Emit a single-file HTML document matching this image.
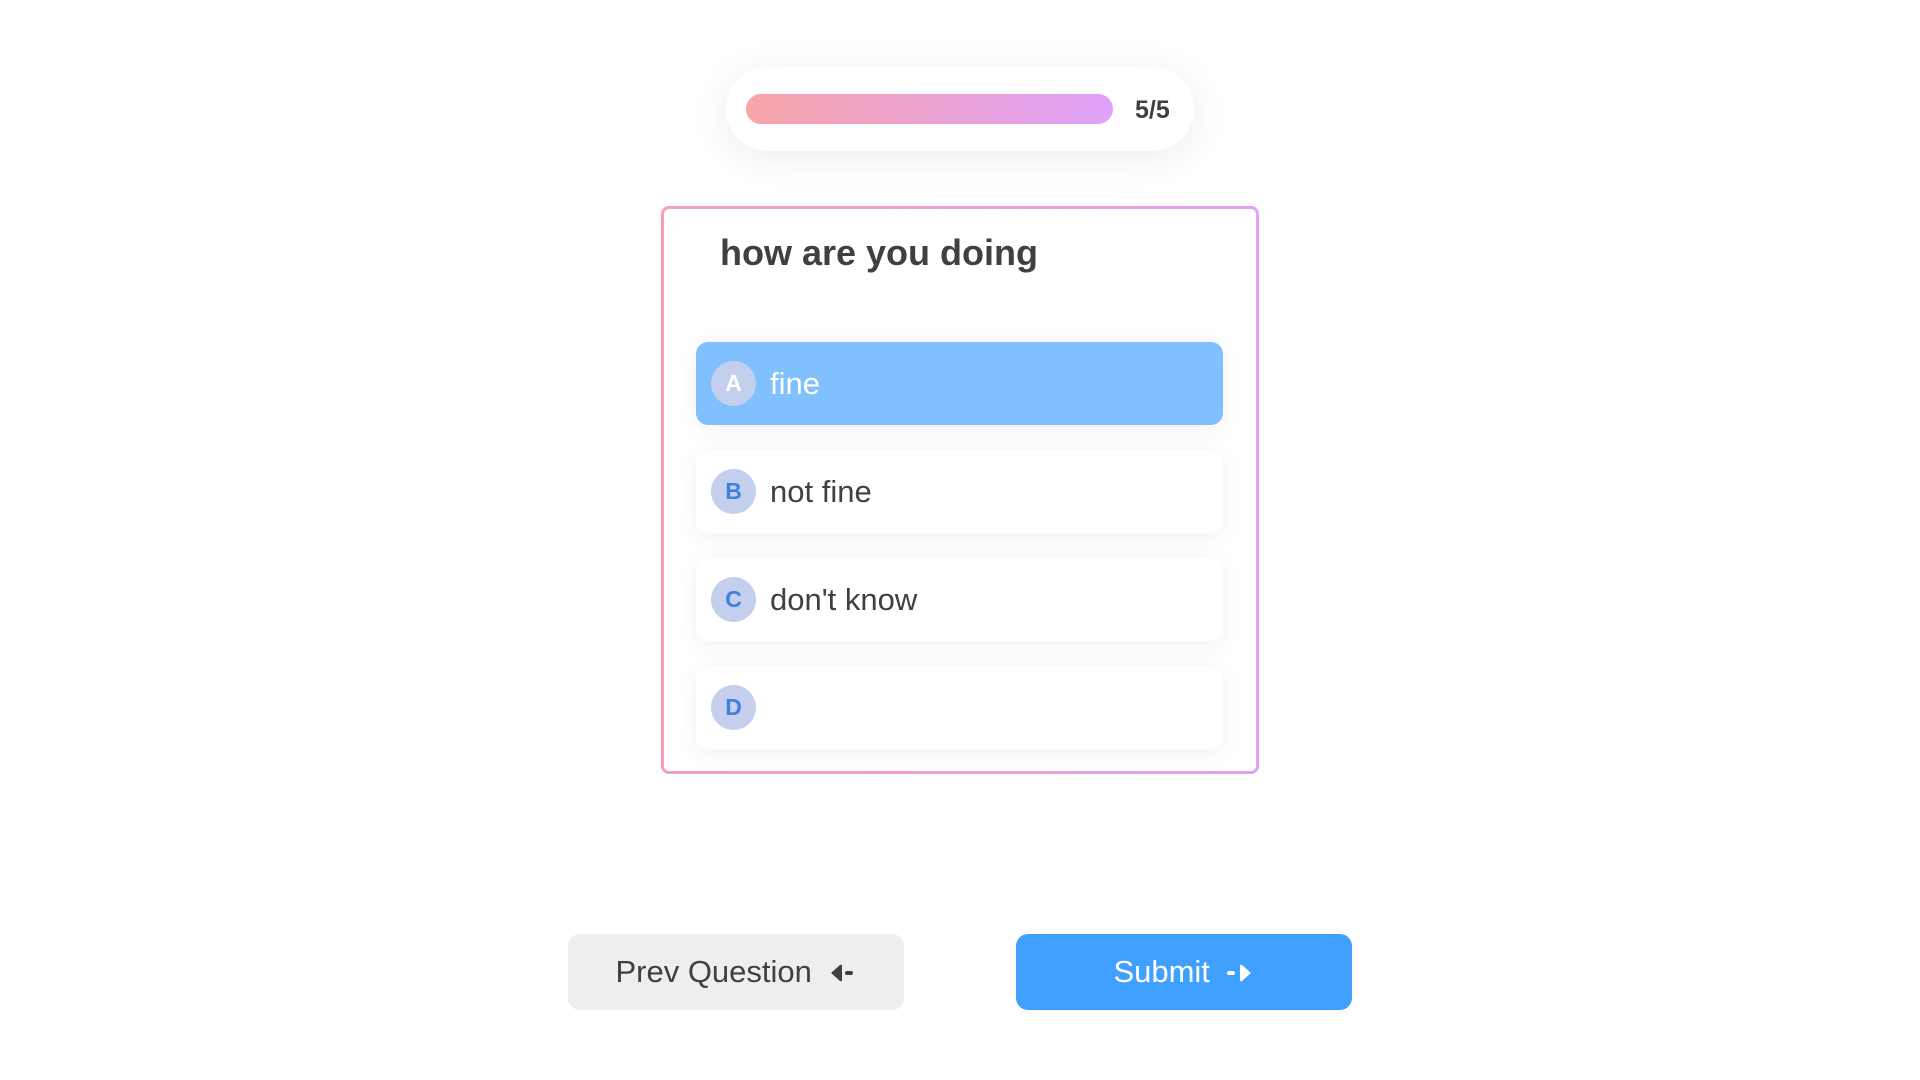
<!DOCTYPE html>
<html><head><style>
*{box-sizing:border-box;margin:0;padding:0}
body{width:1920px;height:1080px;background:#fff;font-family:"Liberation Sans",sans-serif;position:relative;overflow:hidden;color:#404040}
.prog{position:absolute;left:726px;top:67px;width:468px;height:84px;border-radius:42px;background:#fff;box-shadow:0 6px 40px rgba(0,0,0,0.08)}
.bar{position:absolute;left:20px;top:27px;width:367px;height:30px;border-radius:15px;background:linear-gradient(90deg,#f8a4a8,#dfa2fa)}
.num{position:absolute;left:409px;top:1px;line-height:84px;font-size:25px;font-weight:bold;color:#404040}
.card{position:absolute;left:661px;top:206px;width:598px;height:568px;border-radius:8px;border:3px solid transparent;background:linear-gradient(#fff,#fff) padding-box,linear-gradient(90deg,#f6a0b2,#e0a2ee) border-box}
.q{position:absolute;left:56px;top:23px;font-size:36px;font-weight:bold;color:#404040}
.opt{position:absolute;left:32px;width:527px;height:83px;border-radius:12px;background:#fff;box-shadow:0 4px 24px rgba(0,0,0,0.06)}
.opt.sel{background:#80c0fe}
.c{position:absolute;left:15px;top:19px;width:45px;height:45px;border-radius:50%;background:#c3cfec;color:#3f7fdf;font-weight:bold;font-size:23px;text-align:center;line-height:45px}
.sel .c{color:#fff}
.t{position:absolute;left:74px;top:0;line-height:83px;font-size:31px;color:#404040}
.sel .t{color:#fff}
.btn{position:absolute;top:934px;width:336px;height:76px;border-radius:12px;font-size:31px;line-height:76px;text-align:center}
</style></head><body>
<div class="prog"><div class="bar"></div><div class="num">5/5</div></div>
<div class="card">
<div class="q">how are you doing</div>
<div class="opt sel" style="top:133px"><div class="c">A</div><div class="t">fine</div></div>
<div class="opt" style="top:241px"><div class="c">B</div><div class="t">not fine</div></div>
<div class="opt" style="top:349px"><div class="c">C</div><div class="t">don't know</div></div>
<div class="opt" style="top:457px"><div class="c">D</div></div>
</div>
<div class="btn" style="left:568px;background:#eeeeee;color:#404040">Prev Question <svg width="30" height="22" viewBox="0 0 30 22" style="vertical-align:-2px;margin-left:6px"><path d="M4 11 L13 3 Q15 2 15 4 L15 18 Q15 20 13 19 Z" fill="#404040"/><rect x="18" y="9" width="8" height="4" rx="2" fill="#404040"/></svg></div>
<div class="btn" style="left:1016px;background:#40a0ff;color:#fff">Submit <svg width="30" height="22" viewBox="0 0 30 22" style="vertical-align:-2px;margin-left:6px"><rect x="2" y="9" width="8" height="4" rx="2" fill="#fff"/><path d="M26 11 L17 3 Q15 2 15 4 L15 18 Q15 20 17 19 Z" fill="#fff"/></svg></div>
</body></html>
